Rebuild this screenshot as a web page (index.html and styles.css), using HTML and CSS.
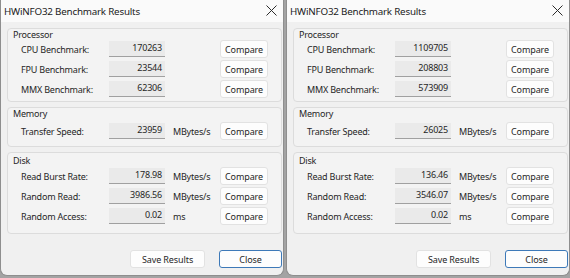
FILE: index.html
```html
<!DOCTYPE html>
<html lang="en">
    <head>
        <meta charset="UTF-8">
        <title>HWiNFO32 Benchmark Results</title>
        <link rel="stylesheet" href="styles.css">
    </head>
    <body>

        <div class="desktop">

            <div class="window">
                <div class="titlebar">
                    <span class="title">HWiNFO32 Benchmark Results</span>
                    <svg class="close-x" width="11" height="11" viewBox="0 0 11 11"><path d="M0.5 0.5 L10.5 10.5 M10.5 0.5 L0.5 10.5" stroke="#2b2b2b" stroke-width="1" fill="none"/></svg>
                </div>
                <div class="client">
                    <div class="group grp-cpu">
                        <div class="legend">Processor</div>
                        <div class="row"><span class="lbl">CPU Benchmark:</span><span class="val">170263</span><span class="unit"></span><button class="btn">Compare</button></div>
                        <div class="row"><span class="lbl">FPU Benchmark:</span><span class="val">23544</span><span class="unit"></span><button class="btn">Compare</button></div>
                        <div class="row"><span class="lbl">MMX Benchmark:</span><span class="val">62306</span><span class="unit"></span><button class="btn">Compare</button></div>
                    </div>
                    <div class="group grp-mem">
                        <div class="legend">Memory</div>
                        <div class="row"><span class="lbl">Transfer Speed:</span><span class="val">23959</span><span class="unit">MBytes/s</span><button class="btn">Compare</button></div>
                    </div>
                    <div class="group grp-disk">
                        <div class="legend">Disk</div>
                        <div class="row"><span class="lbl">Read Burst Rate:</span><span class="val">178.98</span><span class="unit">MBytes/s</span><button class="btn">Compare</button></div>
                        <div class="row"><span class="lbl">Random Read:</span><span class="val">3986.56</span><span class="unit">MBytes/s</span><button class="btn">Compare</button></div>
                        <div class="row"><span class="lbl">Random Access:</span><span class="val">0.02</span><span class="unit">ms</span><button class="btn">Compare</button></div>
                    </div>
                    <div class="actions">
                        <button class="btn btn-save">Save Results</button>
                        <button class="btn btn-close">Close</button>
                    </div>
                </div>
            </div>

            <div class="window">
                <div class="titlebar">
                    <span class="title">HWiNFO32 Benchmark Results</span>
                    <svg class="close-x" width="11" height="11" viewBox="0 0 11 11"><path d="M0.5 0.5 L10.5 10.5 M10.5 0.5 L0.5 10.5" stroke="#2b2b2b" stroke-width="1" fill="none"/></svg>
                </div>
                <div class="client">
                    <div class="group grp-cpu">
                        <div class="legend">Processor</div>
                        <div class="row"><span class="lbl">CPU Benchmark:</span><span class="val">1109705</span><span class="unit"></span><button class="btn">Compare</button></div>
                        <div class="row"><span class="lbl">FPU Benchmark:</span><span class="val">208803</span><span class="unit"></span><button class="btn">Compare</button></div>
                        <div class="row"><span class="lbl">MMX Benchmark:</span><span class="val">573909</span><span class="unit"></span><button class="btn">Compare</button></div>
                    </div>
                    <div class="group grp-mem">
                        <div class="legend">Memory</div>
                        <div class="row"><span class="lbl">Transfer Speed:</span><span class="val">26025</span><span class="unit">MBytes/s</span><button class="btn">Compare</button></div>
                    </div>
                    <div class="group grp-disk">
                        <div class="legend">Disk</div>
                        <div class="row"><span class="lbl">Read Burst Rate:</span><span class="val">136.46</span><span class="unit">MBytes/s</span><button class="btn">Compare</button></div>
                        <div class="row"><span class="lbl">Random Read:</span><span class="val">3546.07</span><span class="unit">MBytes/s</span><button class="btn">Compare</button></div>
                        <div class="row"><span class="lbl">Random Access:</span><span class="val">0.02</span><span class="unit">ms</span><button class="btn">Compare</button></div>
                    </div>
                    <div class="actions">
                        <button class="btn btn-save">Save Results</button>
                        <button class="btn btn-close">Close</button>
                    </div>
                </div>
            </div>

        </div>

    </body>
</html>
```

FILE: styles.css
```css
body {
    margin: 0;
    background: #a3a3a3;
    font-family: 'Noto Sans', 'Open Sans', sans-serif;
    font-size: 9px;
    letter-spacing: -0.2px;
    color: #262626;
}
.desktop {
    display: flex;
    gap: 2px;
}
.window {
    box-sizing: border-box;
    width: 284px;
    height: 276px;
    background: #f0f0f0;
    border: 1px solid #8e8e8e;
    border-top: none;
    border-radius: 0 0 7px 7px;
}
.titlebar {
    height: 22px;
    background: #fafafa;
    display: flex;
    align-items: center;
    justify-content: space-between;
    padding: 0 6px 0 3px;
    box-sizing: border-box;
}
.title {
    font-size: 9.8px;
    color: #1a1a1a;
}
.close-x {
    display: block;
    margin-top: -1px;
}
.client {
    padding: 6px 1px 0 6px;
}
.group {
    background: #f3f3f3;
    border: 1px solid #dcdcdc;
    border-radius: 4px;
    padding: 0 0 2px 5px;
}
.grp-mem {
    margin-top: 5px;
    padding-bottom: 5px;
}
.grp-mem .legend {
    margin-bottom: 2px;
}
.grp-disk {
    margin-top: 5px;
    padding-top: 2px;
    padding-bottom: 7px;
}
.grp-disk .legend {
    margin-bottom: 0;
}
.legend {
    line-height: 11px;
    margin-bottom: -1px;
}
.row {
    display: grid;
    grid-template-columns: 88px 56px 55px 48px;
    align-items: center;
    height: 20px;
    padding-left: 8px;
}
.val {
    height: 16px;
    line-height: 14px;
    box-sizing: border-box;
    background: #eaeaea;
    border-bottom: 1px solid #a0a0a0;
    text-align: right;
    padding-right: 3px;
}
.unit {
    padding-left: 8px;
}
.btn {
    font-family: inherit;
    font-size: 9px;
    letter-spacing: -0.1px;
    color: #262626;
    height: 18px;
    padding: 0;
    background: #fdfdfd;
    border: 1px solid #e2e2e2;
    border-radius: 3px;
    cursor: pointer;
}
.actions {
    display: flex;
    justify-content: flex-end;
    gap: 14px;
    margin-top: 16px;
}
.btn-save {
    width: 75px;
}
.btn-close {
    width: 63px;
    border-color: #3d79b8;
}
```
